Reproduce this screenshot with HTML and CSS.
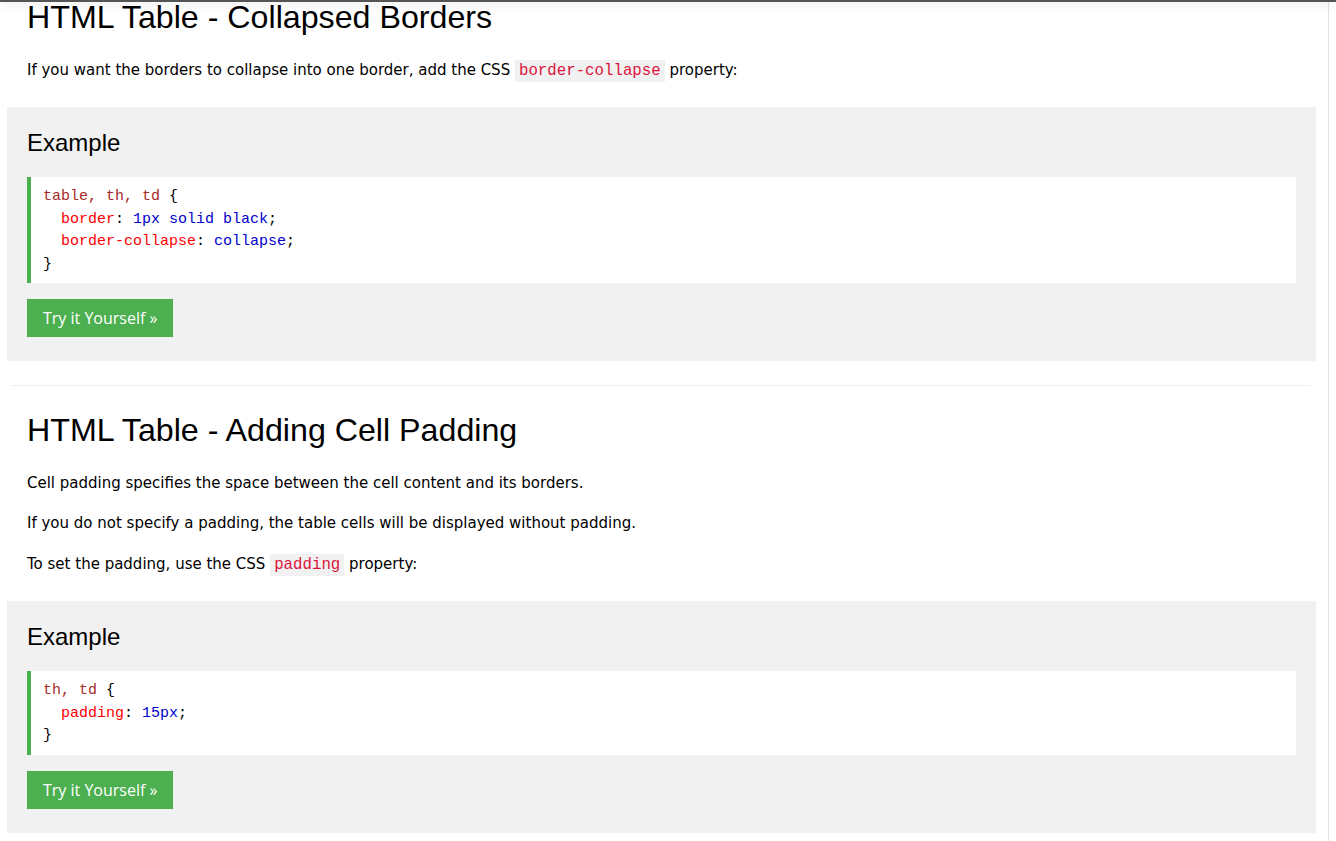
FILE: index.html
```html
<!DOCTYPE html>
<html lang="en">
<head>
<meta charset="utf-8">
<title>HTML Table Borders</title>
<link rel="stylesheet" href="styles.css">
</head>
<body>
<div class="topshadow"></div>
<div class="layout">
  <main class="main">
    <h2 class="title first">HTML Table - Collapsed Borders</h2>
    <p class="para">If you want the borders to collapse into one border, add the CSS <code class="inline">border-collapse</code> property:</p>
    <div class="example">
      <h3 class="ex-title">Example</h3>
      <div class="code">
        <div class="line"><span class="sel">table, th, td</span> {</div>
        <div class="line">&nbsp;&nbsp;<span class="prop">border</span>: <span class="val">1px solid black</span>;</div>
        <div class="line">&nbsp;&nbsp;<span class="prop">border-collapse</span>: <span class="val">collapse</span>;</div>
        <div class="line">}</div>
      </div>
      <a class="btn">Try it Yourself »</a>
    </div>
    <hr class="sep">
    <h2 class="title">HTML Table - Adding Cell Padding</h2>
    <p class="para">Cell padding specifies the space between the cell content and its borders.</p>
    <p class="para">If you do not specify a padding, the table cells will be displayed without padding.</p>
    <p class="para">To set the padding, use the CSS <code class="inline">padding</code> property:</p>
    <div class="example">
      <h3 class="ex-title">Example</h3>
      <div class="code">
        <div class="line"><span class="sel">th, td</span> {</div>
        <div class="line">&nbsp;&nbsp;<span class="prop">padding</span>: <span class="val">15px</span>;</div>
        <div class="line">}</div>
      </div>
      <a class="btn">Try it Yourself »</a>
    </div>
  </main>
  <aside class="side"></aside>
</div>
</body>
</html>
```
FILE: styles.css
```css
html, body {
  margin: 0;
  padding: 0;
  background: #fff;
}
body {
  font-family: "DejaVu Sans", Verdana, sans-serif;
  font-size: 15px;
  color: #000;
  overflow: hidden;
}
.topshadow {
  position: fixed;
  top: 0;
  left: 0;
  right: 0;
  height: 2px;
  background: #555;
  box-shadow: 0 2px 10px rgba(0,0,0,0.18);
  z-index: 5;
}
.layout {
  display: flex;
  min-height: 841px;
}
.main {
  flex: 1;
  padding: 0 12px 0 7px;
}
.side {
  width: 7px;
  border-left: 1px solid #e3e3e3;
}
.title {
  font-family: "Liberation Sans", Arial, sans-serif;
  font-weight: 400;
  font-size: 32.2px;
  line-height: 1.2;
  margin: 25px 0 0 20px;
}
.title.first {
  margin-top: -2px;
}
.para {
  margin: 18px 0 0 20px;
  line-height: 1.5;
}
.title + .para {
  margin-top: 22px;
}
.inline {
  font-family: "Liberation Mono", "Courier New", monospace;
  font-size: 15.75px;
  color: crimson;
  background: #f1f1f1;
  padding: 2px 4px;
}
.example {
  background: #f1f1f1;
  margin-top: 24px;
  padding: 22px 20px 24px;
}
.ex-title {
  font-family: "Liberation Sans", Arial, sans-serif;
  font-weight: 400;
  font-size: 24px;
  line-height: 1.2;
  margin: 0 0 19px;
}
.code {
  background: #fff;
  border-left: 4px solid #4caf50;
  padding: 9px 12px 7px;
  font-family: "Liberation Mono", "Courier New", monospace;
  font-size: 15px;
  line-height: 22.5px;
  margin-bottom: 16px;
}
.sel { color: brown; }
.prop { color: red; }
.val { color: mediumblue; }
.btn {
  display: inline-block;
  background: #4caf50;
  color: #fff;
  font-family: "Open Sans", "Noto Sans", sans-serif;
  font-size: 16px;
  line-height: 38px;
  padding: 0 16px;
}
.sep {
  border: 0;
  border-top: 1px solid #eee;
  margin: 24px 5px 0 4px;
}
```
